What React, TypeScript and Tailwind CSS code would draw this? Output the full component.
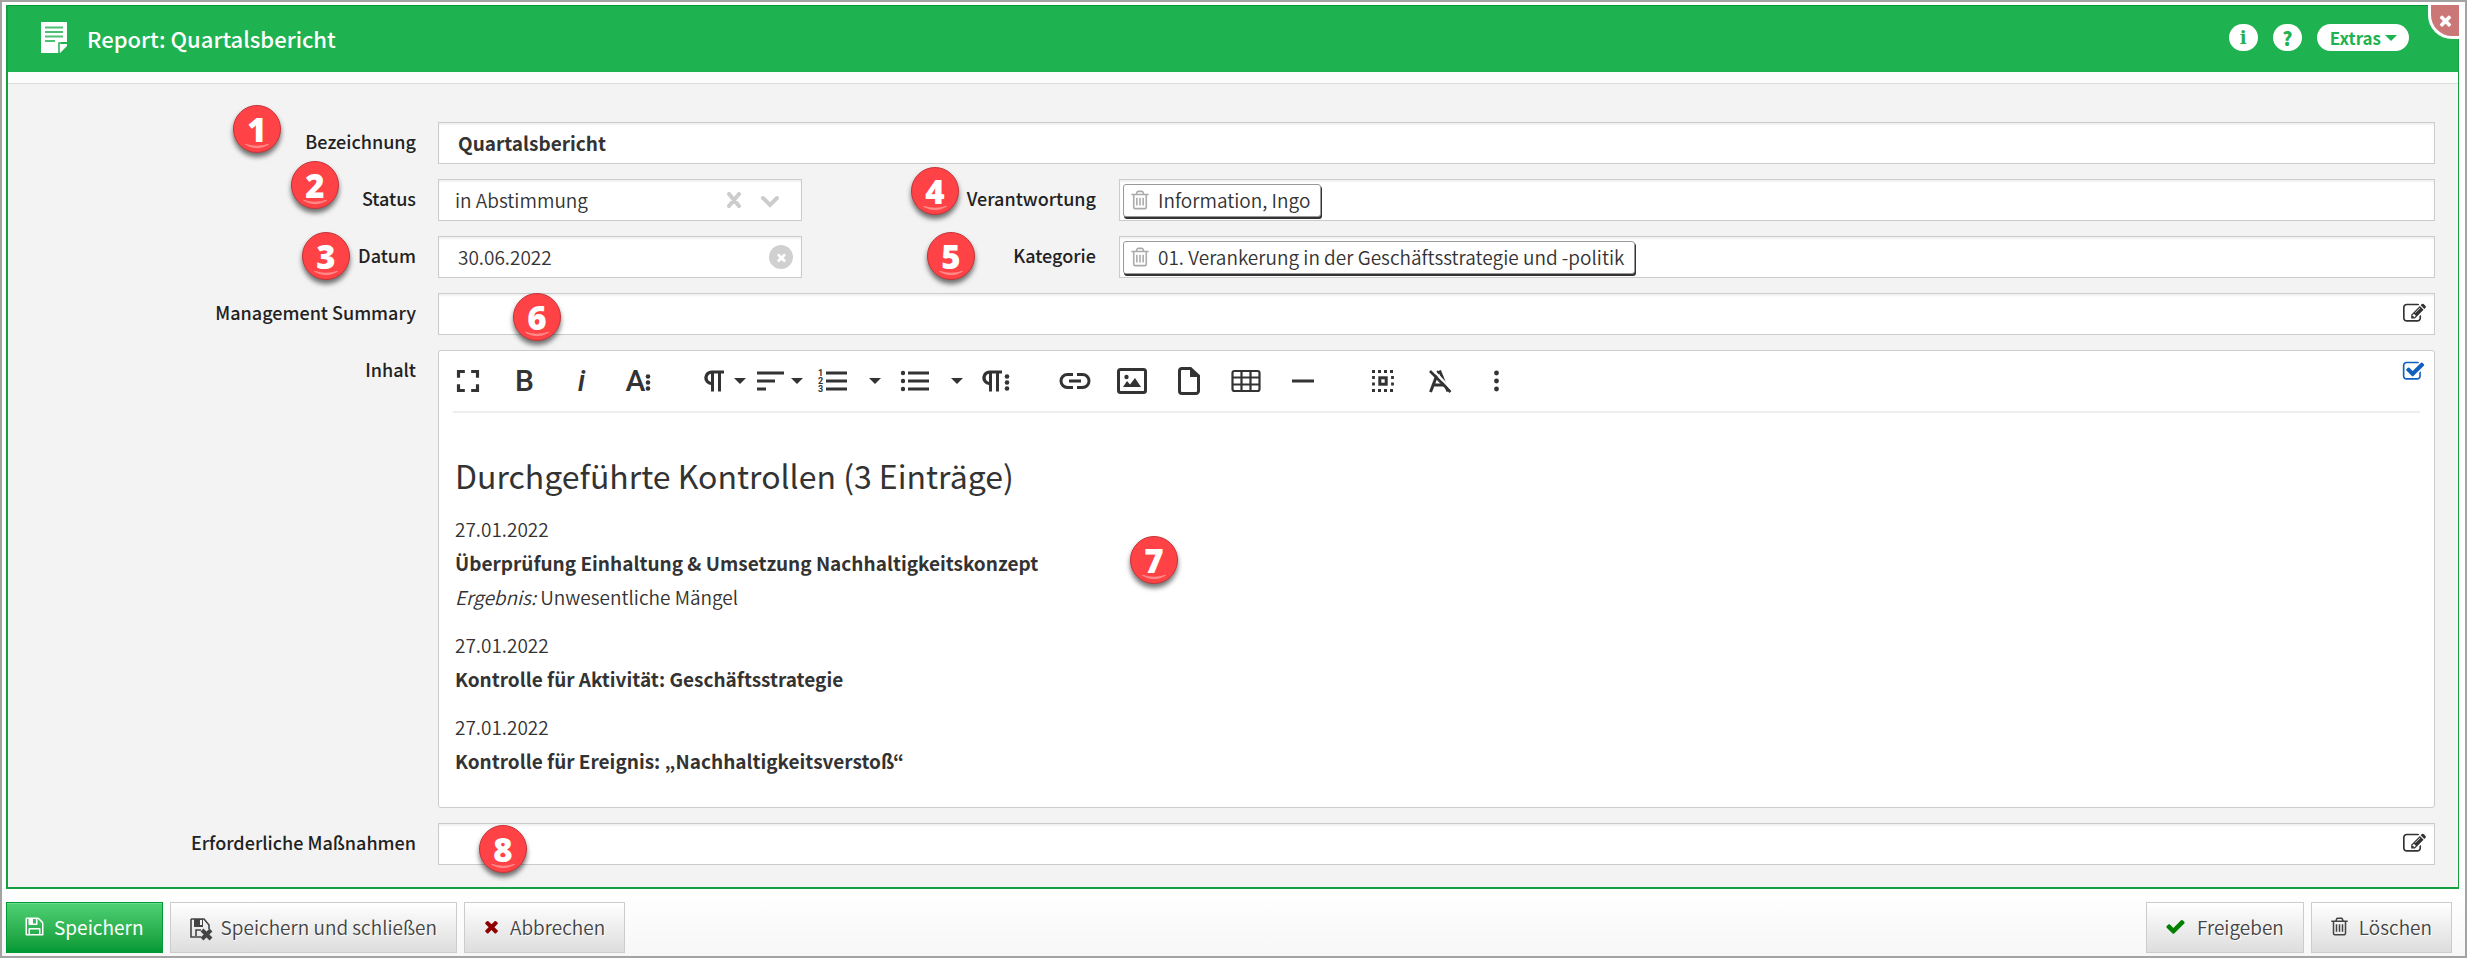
import React from 'react';
import type { ReactNode } from 'react';
import { MdFullscreen } from 'react-icons/md';

const FA = {
  check:
    'M1671 566q0 40-28 68l-724 724-136 136q-28 28-68 28t-68-28l-136-136-362-362q-28-28-28-68t28-68l136-136q28-28 68-28t68 28l294 295 656-657q28-28 68-28t68 28l136 136q28 28 28 68z',
  times:
    'M1490 1322q0 40-28 68l-136 136q-28 28-68 28t-68-28l-294-294-294 294q-28 28-68 28t-68-28l-136-136q-28-28-28-68t28-68l294-294-294-294q-28-28-28-68t28-68l136-136q28-28 68-28t68 28l294 294 294-294q28-28 68-28t68 28l136 136q28 28 28 68t-28 68l-294 294 294 294q28 28 28 68z',
  trash:
    'M704 736v576q0 14-9 23t-23 9h-64q-14 0-23-9t-9-23v-576q0-14 9-23t23-9h64q14 0 23 9t9 23zm256 0v576q0 14-9 23t-23 9h-64q-14 0-23-9t-9-23v-576q0-14 9-23t23-9h64q14 0 23 9t9 23zm256 0v576q0 14-9 23t-23 9h-64q-14 0-23-9t-9-23v-576q0-14 9-23t23-9h64q14 0 23 9t9 23zm128 724v-948h-896v948q0 22 7 40.5t14.5 27 10.5 8.5h832q3 0 10.5-8.5t14.5-27 7-40.5zm-672-1076h448l-48-117q-7-9-17-11h-317q-10 2-17 11zm928 32v64q0 14-9 23t-23 9h-96v948q0 83-47 143.5t-113 60.5h-832q-66 0-113-58.5t-47-141.5v-952h-96q-14 0-23-9t-9-23v-64q0-14 9-23t23-9h309l70-167q15-37 54-63t79-26h320q40 0 79 26t54 63l70 167h309q14 0 23 9t9 23z',
  edit:
    'M888 1184l116-116-152-152-116 116v56h96v96h56zm440-720q-16-16-33 1l-350 350q-17 17-1 33t33-1l350-350q17-17 1-33zm80 594v190q0 119-84.5 203.5t-203.5 84.5h-832q-119 0-203.5-84.5t-84.5-203.5v-832q0-119 84.5-203.5t203.5-84.5h832q63 0 117 25 15 7 18 23 3 17-9 29l-49 49q-14 14-32 8-23-6-45-6h-832q-66 0-113 47t-47 113v832q0 66 47 113t113 47h832q66 0 113-47t47-113v-126q0-13 9-22l64-64q15-15 35-7t20 29zm-96-738l288 288-672 672h-288v-288zm444 132l-92 92-288-288 92-92q28-28 68-28t68 28l152 152q28 28 28 68t-28 68z',
  checkSquare:
    'M1472 930v318q0 119-84.5 203.5t-203.5 84.5h-832q-119 0-203.5-84.5t-84.5-203.5v-832q0-119 84.5-203.5t203.5-84.5h832q63 0 117 25 15 7 18 23 3 17-9 29l-49 49q-10 10-23 10-3 0-9-2-23-6-45-6h-832q-66 0-113 47t-47 113v832q0 66 47 113t113 47h832q66 0 113-47t47-113v-254q0-13 9-22l64-64q10-10 23-10 6 0 12 3 20 8 20 29zm231-489l-814 814q-24 24-57 24t-57-24l-430-430q-24-24-24-57t24-57l110-110q24-24 57-24t57 24l263 263 647-647q24-24 57-24t57 24l110 110q24 24 24 57t-24 57z',
  floppy:
    'M512 1536h768v-384h-768v384zm896 0h128v-896q0-14-10-38.5t-20-34.5l-281-281q-10-10-34-20t-39-10v416q0 40-28 68t-68 28h-576q-40 0-68-28t-28-68v-416h-128v1280h128v-416q0-40 28-68t68-28h832q40 0 68 28t28 68v416zm-384-928v-320q0-13-9.5-22.5t-22.5-9.5h-192q-13 0-22.5 9.5t-9.5 22.5v320q0 13 9.5 22.5t22.5 9.5h192q13 0 22.5-9.5t9.5-22.5zm640 32v928q0 40-28 68t-68 28h-1344q-40 0-68-28t-28-68v-1344q0-40 28-68t68-28h928q40 0 88 20t76 48l280 280q28 28 48 76t20 88z',
};

function Fa({ name, className = '' }: { name: keyof typeof FA; className?: string }) {
  return (
    <svg viewBox="0 0 1792 1792" fill="currentColor" aria-hidden="true" className={`shrink-0 ${className}`}>
      <path d={FA[name]} />
    </svg>
  );
}

/* ---------- shared form pieces ---------- */

const box = 'border border-[#ccc] bg-white shadow-[inset_0_2px_2px_rgba(0,0,0,0.06)]';
const labelText = 'shrink-0 pt-[6px] text-right text-[18px] leading-[26px] font-medium text-[#222]';

function Row({ label, htmlFor, children }: { label: string; htmlFor: string; children: ReactNode }) {
  return (
    <div className="flex items-start">
      <label htmlFor={htmlFor} className={`w-[408px] ${labelText}`}>
        {label}
      </label>
      <div className="ml-[22px] min-w-0 flex-1">{children}</div>
    </div>
  );
}

function Tag({ id, children }: { id: string; children: ReactNode }) {
  return (
    <div className={`flex h-[42px] items-center px-[3px] ${box}`}>
      <span className="flex h-[33px] items-center rounded-[3px] border border-[#999] bg-white pr-[10px] pl-[5px] shadow-[1px_2px_0_#333]">
        <button id={id} aria-label="Entfernen" className="flex text-[#aaa]">
          <Fa name="trash" className="size-[22px]" />
        </button>
        <span className="ml-[7px] leading-[28px]">{children}</span>
      </span>
    </div>
  );
}

function Marker({ n, className }: { n: number; className: string }) {
  return (
    <span
      className={`absolute flex size-[48px] items-center justify-center rounded-full border border-[#c4353a] bg-[#ff4245] font-['Open_Sans',sans-serif] text-[33px] leading-none font-extrabold text-white shadow-[0_4px_5px_rgba(0,0,0,0.55)] ${className}`}
    >
      {n}
      <svg viewBox="0 0 48 48" className="absolute inset-0" aria-hidden="true">
        <path d="M12 40q12 7 24 0q-12 4-24 0z" fill="#ff8b8b" stroke="#ff8b8b" />
      </svg>
    </span>
  );
}

/* ---------- editor toolbar ---------- */

function Tool({ label, children, wide = false }: { label: string; children: ReactNode; wide?: boolean }) {
  return (
    <button aria-label={label} className="relative flex h-[60px] w-[57px] items-center justify-center">
      {children}
      {wide && <Caret className="absolute right-[-4px]" />}
    </button>
  );
}

function Caret({ className = '' }: { className?: string }) {
  return (
    <svg viewBox="0 0 12 6" className={`h-[6px] w-[12px] ${className}`} fill="currentColor" aria-hidden="true">
      <path d="M0 0h12l-6 6z" />
    </svg>
  );
}

function Draw({ children }: { children: ReactNode }) {
  return (
    <svg viewBox="0 0 38 38" className="size-[38px]" fill="currentColor" aria-hidden="true">
      {children}
    </svg>
  );
}

const glyph = "font-['Roboto',sans-serif] text-[30px] leading-[38px]";

function Dots({ x }: { x: number }) {
  return (
    <>
      <circle cx={x} cy="14.5" r="2.3" />
      <circle cx={x} cy="20.5" r="2.3" />
      <circle cx={x} cy="26.5" r="2.3" />
    </>
  );
}

function Toolbar() {
  return (
    <div className="mx-[14px] flex items-center border-b-2 border-[#eee] text-[#333]">
      <div className="ml-[-14px] flex">
        <Tool label="Vollbild"><MdFullscreen className="size-[38px]" /></Tool>
        <Tool label="Fett"><span className={`${glyph} font-medium`}>B</span></Tool>
        <Tool label="Kursiv"><span className={`${glyph} font-medium italic`}>i</span></Tool>
        <Tool label="Mehr Text">
          <span className={`${glyph} font-medium`}>A</span>
          <svg viewBox="0 0 6 38" className="h-[38px] w-[6px]" fill="currentColor" aria-hidden="true"><Dots x={3} /></svg>
        </Tool>
      </div>
      <div className="ml-[18px] flex">
        <Tool label="Absatzformat" wide>
          <Draw>
            <path d="M17 8.500h12v3h-3v18h-3v-18h-4v18h-3V23a7.250 7.250 0 0 1 1-14.500zM16 11.700a4.200 4.200 0 0 0 0 8.200z" fillRule="evenodd" />
          </Draw>
        </Tool>
        <Tool label="Ausrichtung" wide>
          <Draw><path d="M5 9.500h27v3H5zM5 17.500h18v3H5zM5 25.500h9v3H5z" /></Draw>
        </Tool>
        <div className="flex items-center pl-[5px]">
          <Tool label="Nummerierte Liste">
            <Draw>
              <path d="M12 9.500h21v3H12zM12 17.500h21v3H12zM12 25.500h21v3H12z" />
              <g fontFamily="Roboto, sans-serif" fontSize="9" fontWeight="700">
                <text x="4" y="14">1</text>
                <text x="4" y="22">2</text>
                <text x="4" y="30">3</text>
              </g>
            </Draw>
          </Tool>
          <button aria-label="Listentyp" className="flex h-[60px] w-[25px] items-center pl-[8px]"><Caret /></button>
        </div>
        <div className="flex items-center">
          <Tool label="Aufzählung">
            <Draw>
              <path d="M12 9.500h21v3H12zM12 17.500h21v3H12zM12 25.500h21v3H12z" />
              <circle cx="7" cy="11" r="2.2" />
              <circle cx="7" cy="19" r="2.2" />
              <circle cx="7" cy="27" r="2.2" />
            </Draw>
          </Tool>
          <button aria-label="Aufzählungstyp" className="flex h-[60px] w-[25px] items-center pl-[8px]"><Caret /></button>
        </div>
        <Tool label="Mehr Absatz">
          <Draw>
            <path d="M12 8.500h12v3h-3v18h-3v-18h-4v18h-3V23a7.250 7.250 0 0 1 1-14.500zM11 11.700a4.200 4.200 0 0 0 0 8.200z" fillRule="evenodd" />
            <Dots x={29} />
          </Draw>
        </Tool>
      </div>
      <div className="ml-[21px] flex">
        <Tool label="Link">
          <Draw>
            <path
              d="M17 12.500h-5.500a6.500 6.500 0 0 0 0 13H17M21 12.500h5.500a6.500 6.500 0 0 1 0 13H21M13 19h12"
              fill="none" stroke="currentColor" strokeWidth="3"
            />
          </Draw>
        </Tool>
        <Tool label="Bild">
          <Draw>
            <rect x="5.500" y="7.500" width="27" height="23" rx="2" fill="none" stroke="currentColor" strokeWidth="3" />
            <circle cx="13.500" cy="15" r="2.2" />
            <path d="M10 25l4-6 3 3.500 5-6.500 6 9z" />
          </Draw>
        </Tool>
        <Tool label="Datei">
          <Draw>
            <path d="M20.500 6.500H12a2.500 2.500 0 0 0-2.500 2.500v20A2.500 2.500 0 0 0 12 31.500h14a2.500 2.500 0 0 0 2.500-2.500V14z" fill="none" stroke="currentColor" strokeWidth="3" />
            <path d="M20 6l9 9h-9z" />
          </Draw>
        </Tool>
        <Tool label="Tabelle">
          <Draw>
            <path d="M7.500 9h23a2 2 0 0 1 2 2v16a2 2 0 0 1-2 2h-23a2 2 0 0 1-2-2V11a2 2 0 0 1 2-2zM5.500 15.500h27M5.500 22.500h27M14.500 9v20M23.500 9v20" fill="none" stroke="currentColor" strokeWidth="2.200" />
          </Draw>
        </Tool>
        <Tool label="Linie"><Draw><path d="M8 17.500h22v3H8z" /></Draw></Tool>
      </div>
      <div className="ml-[23px] flex">
        <Tool label="Alles auswählen">
          <Draw>
            <path
              d="M8 9.500h3M14 9.500h3M20 9.500h3M26 9.500h3M8 28.500h3M14 28.500h3M20 28.500h3M26 28.500h3M9.500 14v3M9.500 20.500v3M28.500 14v3M28.500 20.500v3"
              stroke="currentColor" strokeWidth="2.800"
            />
            <rect x="15.800" y="15.800" width="6.400" height="6.400" fill="none" stroke="currentColor" strokeWidth="3" />
          </Draw>
        </Tool>
        <Tool label="Formatierung löschen">
          <Draw>
            <path d="M9.500 30l8-21M18.500 8.500l8.500 21M13 23h11" fill="none" stroke="currentColor" strokeWidth="3" />
            <path d="M11 7l20 21" stroke="white" strokeWidth="2.500" />
            <path d="M9 9L29.500 30" stroke="currentColor" strokeWidth="2.600" />
          </Draw>
        </Tool>
        <Tool label="Mehr">
          <Draw>
            <circle cx="18.500" cy="11" r="2.400" />
            <circle cx="18.500" cy="19" r="2.400" />
            <circle cx="18.500" cy="27" r="2.400" />
          </Draw>
        </Tool>
      </div>
    </div>
  );
}

/* ---------- footer ---------- */

function Action({ children, primary = false, className }: { children: ReactNode; primary?: boolean; className: string }) {
  const tone = primary
    ? 'border-[#093] bg-linear-to-b from-[#4ed174] to-[#093] font-normal text-white shadow-[inset_0_1px_0_#6fdb8e]'
    : 'border-[#ccc] bg-linear-to-b from-white to-[#ddd] text-[#444] [text-shadow:1px_1px_0_white]';
  return (
    <button className={`flex h-[51px] items-center border pb-[2px] text-[19px] leading-[28px] ${tone} ${className}`}>
      {children}
    </button>
  );
}

export default function App() {
  return (
    <div className="min-h-screen border-2 border-[#a3a3a3] bg-white font-['Noto_Sans_CJK_KR','Noto_Sans',sans-serif] text-[19px] leading-[34px] font-[350] text-[#333]">
      <div className="relative mt-[3px] mr-[6px] ml-[4px] border-r border-b-2 border-l-2 border-[#14a03f] bg-[#f3f3f3]">
        <header className="relative flex h-[67px] items-center border-t border-[#093] bg-[#1fb250] pb-[3px] pl-[33px] text-white">
          <svg viewBox="0 0 26 31" className="h-[31px] w-[26px]" aria-hidden="true">
            <path d="M0 0h26v20h-6v5l-1 6H0z" fill="white" />
            <path d="M26 22v2l-7 7v-9z" fill="white" />
            <path d="M18 31v-10h8" fill="none" stroke="#1fb250" strokeWidth="1.500" />
            <path d="M4 5.500h18M4 10h18M4 14.500h18M4 19h10" fill="none" stroke="#1fb250" strokeWidth="2" strokeOpacity=".8" />
          </svg>
          <h1 className="ml-[20px] text-[22px] leading-[34px] font-medium">Report: Quartalsbericht</h1>
          <div className="mr-[49px] ml-auto flex gap-[15px] text-[#1fb250]">
            <button aria-label="Information" className="flex h-[27px] w-[29px] items-center justify-center rounded-full bg-white font-['DejaVu_Serif',serif] text-[18px] leading-none font-bold">i</button>
            <button aria-label="Hilfe" className="flex h-[27px] w-[29px] items-center justify-center rounded-full bg-white text-[19px] leading-none font-black">?</button>
            <button className="flex h-[27px] items-center gap-[4px] rounded-full bg-white pr-[12px] pl-[13px] text-[17px] leading-none font-bold">
              Extras
              <Caret />
            </button>
          </div>
          <button aria-label="Schließen" className="absolute top-[-1px] right-[-1px] flex h-[34px] w-[31px] items-center justify-center rounded-bl-[24px] border-b-[3px] border-l-[3px] border-white bg-[#c77] text-white">
            <Fa name="times" className="size-[17px]" />
          </button>
        </header>

        <div className="h-[12px] border-b border-[#ddd] bg-[#fcfcfc]" />

        <main className="flex flex-col gap-[15px] pt-[38px] pr-[23px] pb-[22px]">
          <Row label="Bezeichnung" htmlFor="name">
            <input id="name" defaultValue="Quartalsbericht" className={`h-[42px] w-full px-[19px] pb-[2px] font-bold ${box}`} />
          </Row>

          <div className="flex">
            <Row label="Status" htmlFor="status">
              <div className="relative w-[364px]">
                <select id="status" className={`h-[42px] w-full appearance-none px-[16px] ${box}`}>
                  <option>in Abstimmung</option>
                </select>
                <svg viewBox="0 0 52 16" className="pointer-events-none absolute top-[13px] right-[23px] h-[16px] w-[52px]" fill="none" stroke="#ccc" strokeWidth="4" strokeLinecap="round" aria-hidden="true">
                  <path d="M2 2l10 12M12 2l-10 12M36 6l7 7 7-7" />
                </svg>
              </div>
            </Row>
            <div className="ml-[23px] flex min-w-0 flex-1">
              <label htmlFor="owner" className={`w-[271px] ${labelText}`}>Verantwortung</label>
              <div className="ml-[23px] min-w-0 flex-1"><Tag id="owner">Information, Ingo</Tag></div>
            </div>
          </div>

          <div className="flex">
            <Row label="Datum" htmlFor="date">
              <div className="relative w-[364px]">
                <input id="date" defaultValue="30.06.2022" className={`h-[42px] w-full px-[19px] pb-[2px] ${box}`} />
                <button aria-label="Datum löschen" className="absolute top-[9px] right-[9px] flex size-[24px] items-center justify-center rounded-full bg-[#d0d0d0] text-white">
                  <Fa name="times" className="size-[13px]" />
                </button>
              </div>
            </Row>
            <div className="ml-[23px] flex min-w-0 flex-1">
              <label htmlFor="category" className={`w-[271px] ${labelText}`}>Kategorie</label>
              <div className="ml-[23px] min-w-0 flex-1">
                <Tag id="category">01. Verankerung in der Geschäftsstrategie und -politik</Tag>
              </div>
            </div>
          </div>

          <Row label="Management Summary" htmlFor="summary">
            <div className="relative">
              <input id="summary" className={`h-[42px] w-full px-[19px] ${box}`} />
              <button aria-label="Bearbeiten" className="absolute top-[9px] right-[9px]"><Fa name="edit" className="size-[23px]" /></button>
            </div>
          </Row>

          <Row label="Inhalt" htmlFor="content">
            <div className="relative rounded-[3px] border border-[#ccc] bg-white">
              <button aria-label="Übernehmen" className="absolute top-[9px] right-[9px] text-[#1060c0]"><Fa name="checkSquare" className="size-[23px]" /></button>
              <Toolbar />
              <div id="content" className="flex flex-col gap-[14px] px-[16px] pt-[39px] pb-[29px]">
                <h2 className="text-[32px] leading-[46px] font-normal">Durchgeführte Kontrollen (3 Einträge)</h2>
                <div>
                  <p>27.01.2022</p>
                  <p className="font-bold">Überprüfung Einhaltung &amp; Umsetzung Nachhaltigkeitskonzept</p>
                  <p><em>Ergebnis:</em> Unwesentliche Mängel</p>
                </div>
                <div>
                  <p>27.01.2022</p>
                  <p className="font-bold">Kontrolle für Aktivität: Geschäftsstrategie</p>
                </div>
                <div>
                  <p>27.01.2022</p>
                  <p className="font-bold">Kontrolle für Ereignis: „Nachhaltigkeitsverstoß“</p>
                </div>
              </div>
            </div>
          </Row>

          <Row label="Erforderliche Maßnahmen" htmlFor="measures">
            <div className="relative">
              <input id="measures" className={`h-[42px] w-full px-[19px] ${box}`} />
              <button aria-label="Bearbeiten" className="absolute top-[9px] right-[9px]"><Fa name="edit" className="size-[23px]" /></button>
            </div>
          </Row>
        </main>

        <Marker n={1} className="top-[100px] left-[225px]" />
        <Marker n={2} className="top-[156px] left-[283px]" />
        <Marker n={3} className="top-[227px] left-[294px]" />
        <Marker n={4} className="top-[162px] left-[903px]" />
        <Marker n={5} className="top-[227px] left-[919px]" />
        <Marker n={6} className="top-[288px] left-[505px]" />
        <Marker n={7} className="top-[531px] left-[1122px]" />
        <Marker n={8} className="top-[820px] left-[471px]" />
      </div>

      <footer className="flex gap-[7px] bg-linear-to-b from-white to-[#f7f7f7] pt-[13px] pr-[13px] pb-[3px] pl-[4px]">
        <Action primary className="gap-[9px] pr-[18px] pl-[17px]"><Fa name="floppy" className="size-[21px]" />Speichern</Action>
        <Action className="gap-[8px] pr-[19px] pl-[18px]">
          <svg viewBox="0 0 24 24" className="mt-[5px] size-[24px]" aria-hidden="true">
            <path d="M2 2h13l5 6v4M2 2v18h10M7 19v-6h5" fill="none" stroke="currentColor" strokeWidth="1.600" />
            <path d="M5 2h9v8H5zm6 1v5h2V3z" fill="currentColor" fillRule="evenodd" />
            <path d="M13 13l9 9M22 13l-9 9" stroke="currentColor" strokeWidth="4" />
          </svg>
          Speichern und schließen
        </Action>
        <Action className="gap-[9px] pr-[19px] pl-[17px]"><Fa name="times" className="size-[19px] text-[#900000]" />Abbrechen</Action>
        <Action className="ml-auto gap-[11px] pr-[19px] pl-[18px]"><Fa name="check" className="size-[21px] text-[#008000]" />Freigeben</Action>
        <Action className="gap-[9px] pr-[19px] pl-[17px]"><Fa name="trash" className="size-[21px]" />Löschen</Action>
      </footer>
    </div>
  );
}
